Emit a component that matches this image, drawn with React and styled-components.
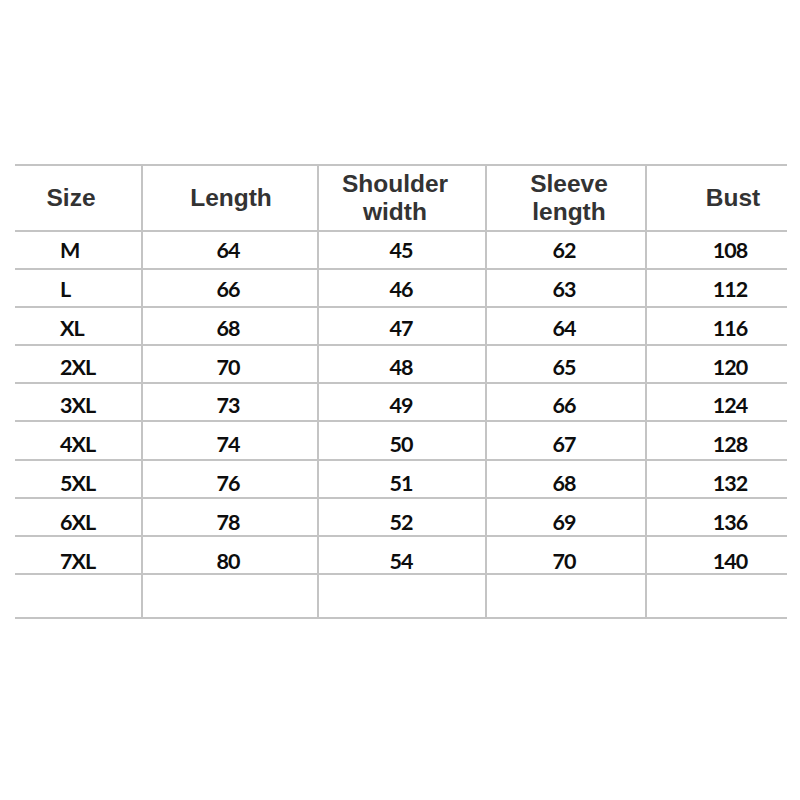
import React from "react";
import styled, { createGlobalStyle } from "styled-components";

const GlobalStyle = createGlobalStyle`
    html, body {
        margin: 0;
        padding: 0;
        background: #ffffff;
    }
`;

const Page = styled.div`
    width: 800px;
    height: 800px;
    box-sizing: border-box;
    padding: 164px 13px 0 15px;
    background: #ffffff;
`;

const Grid = styled.div`
    display: grid;
    grid-template-columns: 128px 176px 168px 160px 140px;
    grid-template-rows: 66px repeat(9, 38.1px) 44px;
    border-top: 2px solid #c4c4c4;
`;

const Cell = styled.div`
    box-sizing: border-box;
    display: flex;
    align-items: center;
    justify-content: ${(p) => (p.$left ? "flex-start" : "center")};
    padding-left: ${(p) => p.$pl || 0}px;
    padding-right: ${(p) => p.$pr || 0}px;
    border-bottom: 2px solid #c4c4c4;
    border-right: ${(p) => (p.$last ? "none" : "2px solid #c4c4c4")};
`;

const HeadText = styled.span`
    font-family: "Liberation Sans", Arial, sans-serif;
    font-weight: 700;
    font-size: 24.5px;
    line-height: 28px;
    color: #333333;
    text-align: center;
    padding-top: 0;
`;

const DataText = styled.span`
    font-family: Lato, "Noto Sans", sans-serif;
    font-weight: 700;
    font-size: 21.5px;
    letter-spacing: -0.9px;
    color: #0d0d0d;
    padding-top: ${(p) => p.$shift}px;
`;

const headers = [
    { label: "Size", pl: 0, pr: 14 },
    { label: "Length", pl: 2, pr: 0 },
    { label: ["Shoulder", "width"], pl: 0, pr: 14 },
    { label: ["Sleeve", "length"], pl: 6, pr: 0 },
    { label: "Bust", pl: 32, pr: 0 },
];

const rows = [
    ["M", "64", "45", "62", "108"],
    ["L", "66", "46", "63", "112"],
    ["XL", "68", "47", "64", "116"],
    ["2XL", "70", "48", "65", "120"],
    ["3XL", "73", "49", "66", "124"],
    ["4XL", "74", "50", "67", "128"],
    ["5XL", "76", "51", "68", "132"],
    ["6XL", "78", "52", "69", "136"],
    ["7XL", "80", "54", "70", "140"],
];

// small nudges so numbers sit where they do in the chart
const dataPad = [
    { left: true, pl: 45 },
    { pl: 0, pr: 4 },
    { pl: 0, pr: 2 },
    { pl: 0, pr: 4 },
    { pl: 26, pr: 0 },
];

const App = () => {
    return (
        <>
            <GlobalStyle />
            <Page>
                <Grid>
                    {headers.map((h, i) => (
                        <Cell key={"h" + i} $pl={h.pl} $pr={h.pr} $last={i === 4}>
                            <HeadText>
                                {Array.isArray(h.label) ? (
                                    <>
                                        {h.label[0]}
                                        <br />
                                        {h.label[1]}
                                    </>
                                ) : (
                                    h.label
                                )}
                            </HeadText>
                        </Cell>
                    ))}
                    {rows.map((r, ri) =>
                        r.map((v, ci) => (
                            <Cell
                                key={ri + "-" + ci}
                                $left={dataPad[ci].left}
                                $pl={dataPad[ci].pl}
                                $pr={dataPad[ci].pr}
                                $last={ci === 4}
                            >
                                <DataText $shift={ri * 1.5}>{v}</DataText>
                            </Cell>
                        ))
                    )}
                    {[0, 1, 2, 3, 4].map((i) => (
                        <Cell key={"e" + i} $last={i === 4} />
                    ))}
                </Grid>
            </Page>
        </>
    );
};

export default App;
